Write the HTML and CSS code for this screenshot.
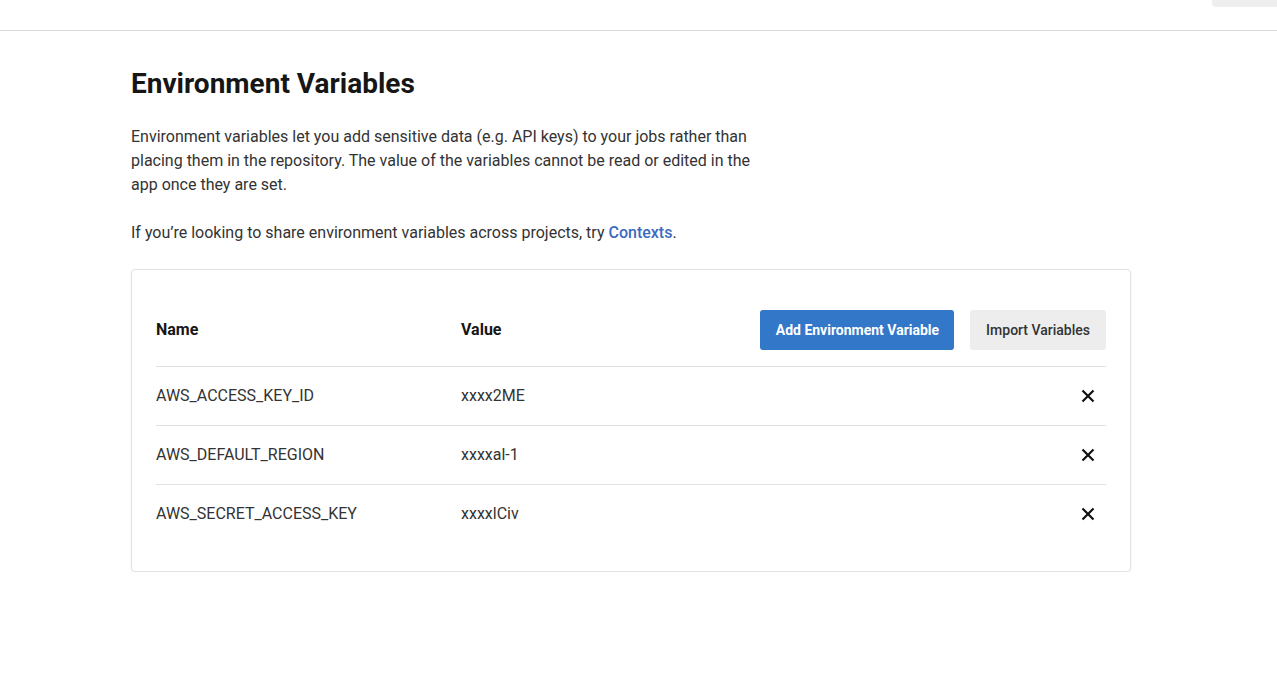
FILE: index.html
```html
<!DOCTYPE html>
<html>
<head>
<meta charset="utf-8">
<link rel="stylesheet" href="styles.css">
</head>
<body>
<header class="topbar">
  <div class="topbar-tab"></div>
</header>
<main class="content">
  <h1 class="title">Environment Variables</h1>
  <p class="desc">Environment variables let you add sensitive data (e.g. API keys) to your jobs rather than placing them in the repository. The value of the variables cannot be read or edited in the app once they are set.</p>
  <p class="desc">If you’re looking to share environment variables across projects, try <a class="link" href="#">Contexts</a>.</p>
  <section class="card">
    <div class="row head">
      <div class="col-name">Name</div>
      <div class="col-value">Value</div>
      <div class="actions">
        <button class="btn primary">Add Environment Variable</button>
        <button class="btn secondary">Import Variables</button>
      </div>
    </div>
    <div class="row">
      <div class="col-name">AWS_ACCESS_KEY_ID</div>
      <div class="col-value">xxxx2ME</div>
      <button class="del" aria-label="delete"><svg width="14" height="14" viewBox="0 0 14 14"><path d="M1.5 1.5L12.5 12.5M12.5 1.5L1.5 12.5" stroke="#111" stroke-width="2.2" fill="none"/></svg></button>
    </div>
    <div class="row">
      <div class="col-name">AWS_DEFAULT_REGION</div>
      <div class="col-value">xxxxal-1</div>
      <button class="del" aria-label="delete"><svg width="14" height="14" viewBox="0 0 14 14"><path d="M1.5 1.5L12.5 12.5M12.5 1.5L1.5 12.5" stroke="#111" stroke-width="2.2" fill="none"/></svg></button>
    </div>
    <div class="row last">
      <div class="col-name">AWS_SECRET_ACCESS_KEY</div>
      <div class="col-value">xxxxlCiv</div>
      <button class="del" aria-label="delete"><svg width="14" height="14" viewBox="0 0 14 14"><path d="M1.5 1.5L12.5 12.5M12.5 1.5L1.5 12.5" stroke="#111" stroke-width="2.2" fill="none"/></svg></button>
    </div>
  </section>
</main>
</body>
</html>
```
FILE: styles.css
```css
* { box-sizing: border-box; }
html, body { margin: 0; padding: 0; background: #fff; }
body {
  font-family: Roboto, "Liberation Sans", sans-serif;
  color: #333;
  font-size: 16px;
}
.topbar {
  height: 31px;
  border-bottom: 1px solid #d9d9d9;
  display: flex;
  justify-content: flex-end;
  align-items: flex-start;
}
.topbar-tab {
  width: 65px;
  height: 7px;
  background: #eeeeee;
  border-radius: 0 0 0 4px;
}
.content {
  margin-left: 131px;
  width: 1000px;
  padding-top: 37px;
}
.title {
  margin: 0 0 25px 0;
  font-size: 28px;
  line-height: 32px;
  font-weight: 700;
  color: #161616;
}
.desc {
  margin: 0 0 24px 0;
  max-width: 640px;
  line-height: 24px;
  color: #333;
}
.link {
  color: #3b6bc0;
  font-weight: 500;
  text-decoration: none;
}
.card {
  margin-top: 24px;
  border: 1px solid #e2e2e2;
  border-radius: 4px;
  box-shadow: 0 1px 3px rgba(0,0,0,0.06);
  padding: 24px 24px 28px 24px;
}
.row {
  display: flex;
  align-items: center;
  height: 59px;
  border-bottom: 1px solid #e2e2e2;
  color: #333;
}
.row.head {
  height: 73px;
  font-weight: 700;
  color: #161616;
}
.row.last { border-bottom: none; height: 58px; }
.col-name { width: 305px; margin-top: -2px; }
.col-value { flex: 1; margin-top: -2px; }
.actions { display: flex; gap: 16px; }
.btn {
  font-family: Roboto, "Liberation Sans", sans-serif;
  font-size: 14px;
  font-weight: 500;
  height: 40px;
  border: none;
  border-radius: 3px;
  padding: 0 16px;
}
.btn.primary { background: #3277c8; color: #fff; font-weight: 700; padding: 0 15px 0 16px; }
.btn.secondary { background: #ededed; color: #333; }
.del {
  border: none;
  background: none;
  padding: 0;
  width: 14px;
  height: 14px;
  margin-right: 11px;
  display: flex;
}
```
